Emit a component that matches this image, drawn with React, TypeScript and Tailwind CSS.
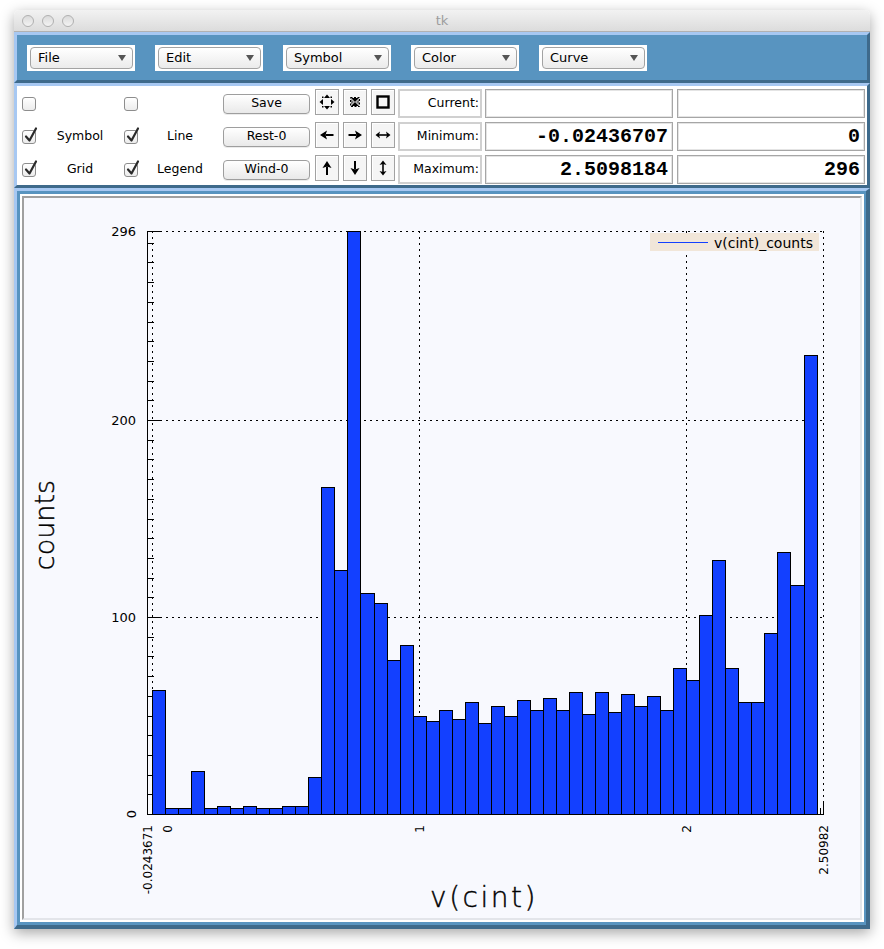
import React from "react";

const bars = [63,3,3,22,3,4,3,4,3,3,4,4,19,166,124,296,112,107,78,86,50,47,53,48,57,46,55,50,58,53,59,53,62,51,62,52,61,55,60,53,74,68,101,129,74,57,57,92,133,116,233];

const yp = (c: number) => Math.round(814 - c * 1.97);
const xe = (i: number) => Math.round(152 + i * 13.03);

function MenuButton({ label }: { label: string }) {
  return (
    <div className="w-[108px] h-[26px] bg-white pt-[2px] pb-[2px] pl-[3px] pr-[2px]">
      <div className="h-full rounded-[4px] border border-[#a3a3a3] bg-gradient-to-b from-white to-[#ebebeb] flex items-center justify-between pl-[7px] pr-[6px] text-[13px] text-black">
        <span>{label}</span>
        <svg width="8" height="6" viewBox="0 0 8 6"><polygon points="0,0 8,0 4,6" fill="#555" /></svg>
      </div>
    </div>
  );
}

function Check({ checked }: { checked: boolean }) {
  return (
    <div className="relative w-[14px] h-[14px] rounded-[3px] border border-[#8d8d8d] bg-gradient-to-b from-white to-[#ececec] shrink-0">
      {checked && (
        <svg className="absolute left-[1px] top-[-4px]" width="14" height="16" viewBox="0 0 14 16">
          <path d="M2 9.5 L5.5 13.5 L12 1.5" fill="none" stroke="#2a2a2a" strokeWidth="2.2" strokeLinecap="round" strokeLinejoin="round" />
        </svg>
      )}
    </div>
  );
}

function PushButton({ label }: { label: string }) {
  return (
    <div className="w-[87px] h-[20px] rounded-[4px] border border-[#9e9e9e] bg-gradient-to-b from-white to-[#e9e9e9] flex items-center justify-center text-[12.5px] text-black shadow-[0_1px_0_rgba(0,0,0,0.08)]">
      {label}
    </div>
  );
}

function IconBtn({ children }: { children: React.ReactNode }) {
  return (
    <div className="w-[24px] h-[26px] border border-[#a2a2a2] bg-[#f5f5f5] shadow-[inset_1px_1px_0_#ffffff] shrink-0 self-start">
      <svg width="22" height="24" viewBox="1 1 22 24" className="block">{children}</svg>
    </div>
  );
}

const icons: React.ReactNode[][] = [
  [
    <g key="a">
      <polygon points="12,5.5 9,9 15,9" fill="#000" />
      <polygon points="12,20.5 9,17 15,17" fill="#000" />
      <polygon points="4.5,13 8,10 8,16" fill="#000" />
      <polygon points="19.5,13 16,10 16,16" fill="#000" />
      <rect x="7" y="7.5" width="1.5" height="1.5" fill="#000" />
      <rect x="15.5" y="7.5" width="1.5" height="1.5" fill="#000" />
      <rect x="7" y="17" width="1.5" height="1.5" fill="#000" />
      <rect x="15.5" y="17" width="1.5" height="1.5" fill="#000" />
    </g>,
    <g key="b">
      <rect x="7.5" y="8.5" width="9" height="9" fill="none" stroke="#000" strokeWidth="1" strokeDasharray="2 1.5" />
      <polygon points="8,9 16,9 12,13" fill="#000" />
      <polygon points="8,17 16,17 12,13" fill="#000" />
      <polygon points="8,10 8,16 11,13" fill="#777" />
      <polygon points="16,10 16,16 13,13" fill="#777" />
    </g>,
    <rect key="c" x="6.5" y="7.5" width="11" height="11" fill="none" stroke="#000" strokeWidth="2.4" />,
  ],
  [
    <g key="d">
      <polygon points="5,13 12,8.5 10.5,13 12,17.5" fill="#000" />
      <line x1="10.5" y1="13" x2="18.5" y2="13" stroke="#000" strokeWidth="2" />
    </g>,
    <g key="e">
      <polygon points="19,13 12,8.5 13.5,13 12,17.5" fill="#000" />
      <line x1="5.5" y1="13" x2="13.5" y2="13" stroke="#000" strokeWidth="2" />
    </g>,
    <g key="f">
      <line x1="7" y1="13" x2="17" y2="13" stroke="#000" strokeWidth="1.6" />
      <polygon points="4.5,13 9,9.5 8,13 9,16.5" fill="#000" />
      <polygon points="19.5,13 15,9.5 16,13 15,16.5" fill="#000" />
    </g>,
  ],
  [
    <g key="g">
      <polygon points="12,6 7.5,13 12,11.5 16.5,13" fill="#000" />
      <line x1="12" y1="11.5" x2="12" y2="20" stroke="#000" strokeWidth="2" />
    </g>,
    <g key="h">
      <polygon points="12,20 7.5,13 12,14.5 16.5,13" fill="#000" />
      <line x1="12" y1="6" x2="12" y2="14.5" stroke="#000" strokeWidth="2" />
    </g>,
    <g key="i">
      <line x1="12" y1="8" x2="12" y2="18" stroke="#000" strokeWidth="1.6" />
      <polygon points="12,5.5 8.5,10 12,9 15.5,10" fill="#000" />
      <polygon points="12,20.5 8.5,16 12,17 15.5,16" fill="#000" />
    </g>,
  ],
];

const rows = [
  { c1: false, l1: "", c2: false, l2: "", btn: "Save", label: "Current:", v1: "", v2: "" },
  { c1: true, l1: "Symbol", c2: true, l2: "Line", btn: "Rest-0", label: "Minimum:", v1: "-0.02436707", v2: "0" },
  { c1: true, l1: "Grid", c2: true, l2: "Legend", btn: "Wind-0", label: "Maximum:", v1: "2.5098184", v2: "296" },
];

function Chart() {
  const dash = "2 4";
  const minorY: number[] = [];
  for (let c = 10; c < 296; c += 10) if (c !== 100 && c !== 200) minorY.push(c);
  const minorX: number[] = [];
  for (let k = 1; k <= 25; k++) if (k % 10 !== 0) minorX.push(Math.round(152 + (k / 10) * 267));
  const xLabels = [
    { t: "-0.0243671", x: 147.5 },
    { t: "0", x: 167.5 },
    { t: "1", x: 419.5 },
    { t: "2", x: 686.5 },
    { t: "2.50982", x: 823.5 },
  ];
  const font = "DejaVu Sans, sans-serif";
  return (
    <svg width="836" height="720" viewBox="24 198 836 720" className="block">
      <g stroke="#000" strokeWidth="1" strokeDasharray={dash} shapeRendering="crispEdges">
        {[296, 200, 100].map((c) => (
          <line key={c} x1="148" x2="824" y1={yp(c) + 0.5} y2={yp(c) + 0.5} />
        ))}
        {[152, 419, 686, 823].map((x) => (
          <line key={x} x1={x + 0.5} x2={x + 0.5} y1={yp(296)} y2="815" />
        ))}
      </g>
      <g stroke="#000" strokeWidth="1" shapeRendering="crispEdges">
        <line x1="147.5" x2="147.5" y1={yp(296)} y2="815" />
        <line x1="147" x2="824" y1="814.5" y2="814.5" />
        {[0, 100, 200, 296].map((c) => (
          <line key={c} x1="147" x2="162" y1={yp(c) + 0.5} y2={yp(c) + 0.5} />
        ))}
        {minorY.map((c) => (
          <line key={c} x1="147" x2="154" y1={yp(c) + 0.5} y2={yp(c) + 0.5} />
        ))}
        {[152, 419, 686, 823].map((x) => (
          <line key={x} x1={x + 0.5} x2={x + 0.5} y1="801" y2="815" />
        ))}
        {minorX.map((x) => (
          <line key={x} x1={x + 0.5} x2={x + 0.5} y1="808" y2="815" />
        ))}
      </g>
      <g fill="#1340ff" stroke="#000" strokeWidth="1" shapeRendering="crispEdges">
        {bars.map((c, i) => {
          const x0 = xe(i);
          const x1 = xe(i + 1);
          const y0 = yp(c);
          return <rect key={i} x={x0 + 0.5} y={y0 + 0.5} width={x1 - x0} height={814 - y0} />;
        })}
      </g>
      <g fontFamily={font} fontSize="13" fill="#000">
        {[296, 200, 100].map((c) => (
          <text key={c} x="136" y={yp(c) + 0.5} textAnchor="end" dominantBaseline="central">{c}</text>
        ))}
        <text x="131" y="814" transform="rotate(-90 131 814)" textAnchor="middle" dominantBaseline="central">0</text>
        {xLabels.map((l) => (
          <text key={l.t} x={l.x} y="825" transform={`rotate(-90 ${l.x} 825)`} textAnchor="end" dominantBaseline="central" fontSize="12">
            {l.t}
          </text>
        ))}
      </g>
      <rect x="650" y="233" width="169" height="18" fill="#f1e6d9" />
      <line x1="658" x2="708" y1="242.5" y2="242.5" stroke="#1340ff" strokeWidth="1" />
      <text x="714" y="242.5" fontFamily={font} fontSize="14" dominantBaseline="central" fill="#000">v(cint)_counts</text>
      <text x="44" y="525" transform="rotate(-90 44 525)" textAnchor="middle" dominantBaseline="central" fontFamily={font} fontSize="27" fontWeight={200} fill="#000" stroke="#000" strokeWidth="0.4">counts</text>
      <text x="484" y="897" textAnchor="middle" dominantBaseline="central" fontFamily={font} fontSize="28" fontWeight={200} letterSpacing="2.5" fill="#000" stroke="#000" strokeWidth="0.4">v(cint)</text>
    </svg>
  );
}

export default function App() {
  return (
    <div className="w-[884px] h-[949px] bg-white pt-[10px] pl-[14px] overflow-hidden [font-family:'DejaVu_Sans',sans-serif] text-[12.5px]">
      <div className="w-[856px] rounded-t-[5px] shadow-[0_4px_14px_rgba(0,0,0,0.35)] flex flex-col">
        <div className="relative h-[22px] rounded-t-[5px] bg-gradient-to-b from-[#f2f2f2] to-[#dcdcdc] border-b border-[#b1b1b1] flex items-center pl-[8px] gap-[8px]">
          <div className="w-[12px] h-[12px] rounded-full border border-[#b0b0b0] bg-gradient-to-b from-[#dadada] to-[#f3f3f3]" />
          <div className="w-[12px] h-[12px] rounded-full border border-[#b0b0b0] bg-gradient-to-b from-[#dadada] to-[#f3f3f3]" />
          <div className="w-[12px] h-[12px] rounded-full border border-[#b0b0b0] bg-gradient-to-b from-[#dadada] to-[#f3f3f3]" />
          <div className="absolute inset-0 flex items-center justify-center text-[13px] text-[#9d9d9d]">tk</div>
        </div>
        <div className="h-[51px] border-[3px] border-t-[#a7c8f2] border-l-[#a7c8f2] border-r-[#3e6a8b] border-b-[#3e6a8b] bg-[#5894c0] flex gap-[20px] pl-[10px] pt-[10px]">
          {["File", "Edit", "Symbol", "Color", "Curve"].map((m) => (
            <MenuButton key={m} label={m} />
          ))}
        </div>
        <div className="h-[105px] border-[3px] border-t-[#a7c8f2] border-l-[#a7c8f2] border-r-[#3e6a8b] border-b-[#3e6a8b] bg-white pt-[3px] flex flex-col gap-[4px]">
          {rows.map((r, i) => (
            <div key={i} className="h-[29px] flex items-center">
              <div className="w-[5px]" />
              <Check checked={r.c1} />
              <div className="w-[88px] text-center text-black">{r.l1}</div>
              <Check checked={r.c2} />
              <div className="w-[84px] text-center text-black">{r.l2}</div>
              <div className="w-[1px]" />
              <PushButton label={r.btn} />
              <div className="w-[5px]" />
              <div className="flex gap-[4px] self-stretch">
                {icons[i].map((ic, j) => (
                  <IconBtn key={j}>{ic}</IconBtn>
                ))}
              </div>
              <div className="w-[3px]" />
              <div className="w-[84px] h-[29px] border-2 border-[#d0d0d0] flex items-center justify-end pr-[1px] text-black shrink-0">
                {r.label}
              </div>
              <div className="w-[3px]" />
              <div className="w-[188px] h-[29px] border border-[#a6a6a6] shadow-[inset_0_0_0_1px_#e4e4e4] flex items-center justify-end pr-[4px] shrink-0 font-bold text-[20px] text-black [font-family:'Liberation_Mono',monospace]">
                {r.v1}
              </div>
              <div className="w-[4px]" />
              <div className="w-[188px] h-[29px] border border-[#a6a6a6] shadow-[inset_0_0_0_1px_#e4e4e4] flex items-center justify-end pr-[4px] shrink-0 font-bold text-[20px] text-black [font-family:'Liberation_Mono',monospace]">
                {r.v2}
              </div>
            </div>
          ))}
        </div>
        <div className="h-[741px] border-t-[3px] border-l-[3px] border-r-[4px] border-b-[4px] border-t-[#a7c8f2] border-l-[#a7c8f2] border-r-[#3e6a8b] border-b-[#3e6a8b] bg-[#5894c0] pt-[3px] pl-[3px] pr-[2px] pb-[3px]">
          <div className="h-full border-2 border-white">
            <div className="h-full border-2 border-t-[#a0a0a0] border-l-[#a0a0a0] border-r-[#e3e5ea] border-b-[#e3e5ea] bg-[#f8f9fe]">
              <Chart />
            </div>
          </div>
        </div>
      </div>
    </div>
  );
}
